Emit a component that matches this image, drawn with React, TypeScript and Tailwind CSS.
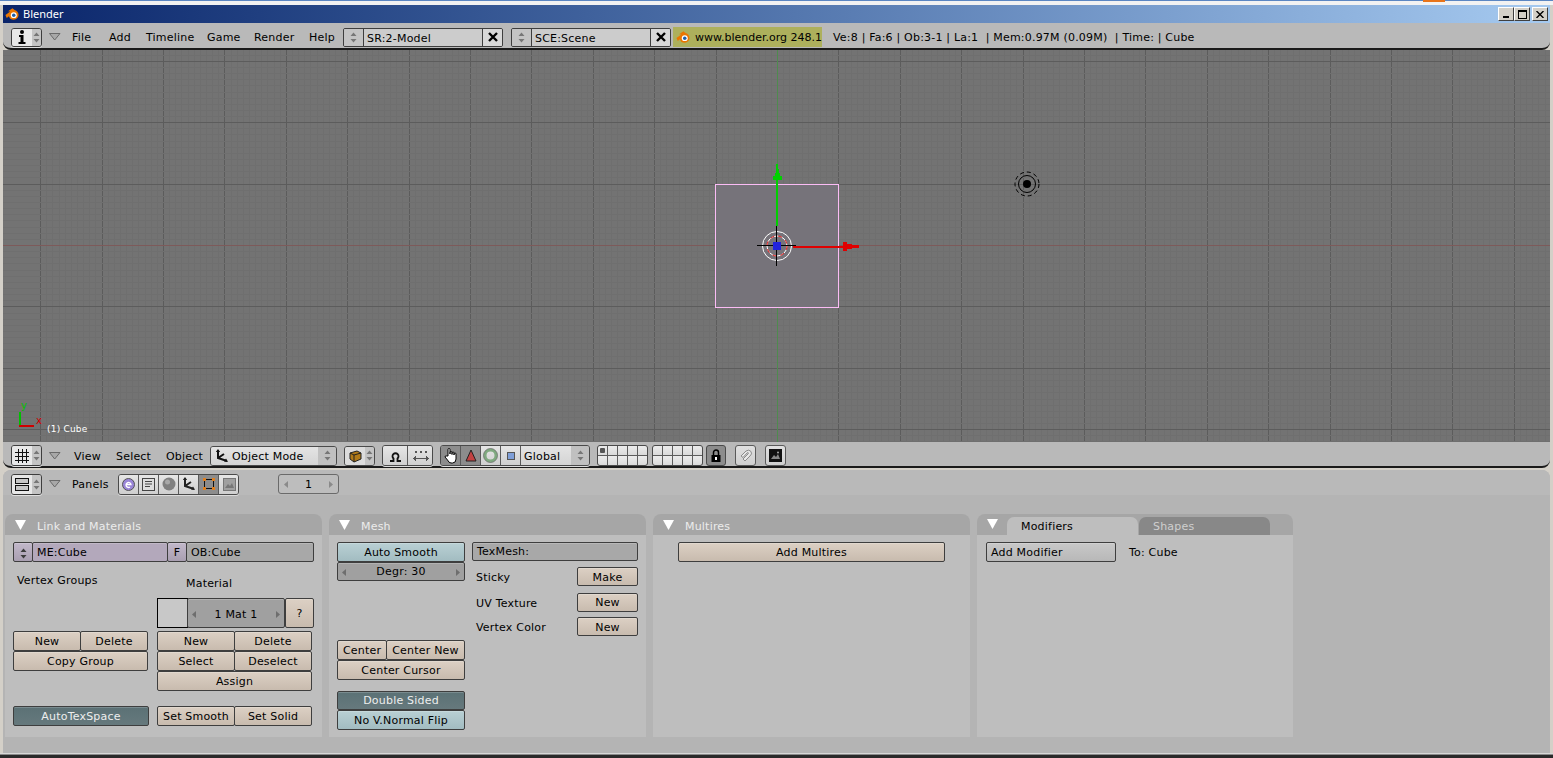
import type { ReactNode } from "react";

const tones = {
  tan: "bg-linear-to-b from-[#dcd0c4] to-[#c8bbae] text-black",
  teal: "bg-linear-to-b from-[#b9d0d4] to-[#a2bcc1] text-black",
  dark: "bg-linear-to-b from-[#5b7175] to-[#66797d] text-[#eeeeee]",
  grey: "bg-linear-to-b from-[#c8c8c8] to-[#b8b8b8] text-black",
  flat: "bg-[#a0a0a0] text-black",
  lilac: "bg-[#b3a8bb] text-black",
  lilacBtn: "bg-linear-to-b from-[#c2b8ca] to-[#a99fb1] text-black",
  field: "bg-[#c8c8c8] text-black",
  ob: "bg-[#a8a8a8] text-black",
  active: "bg-[#8a8a8a] text-black",
};

type Tone = keyof typeof tones;

function Btn({
  w,
  h = 20,
  tone = "tan",
  left,
  className = "",
  children,
}: {
  w: string;
  h?: number;
  tone?: Tone;
  left?: boolean;
  className?: string;
  children?: ReactNode;
}) {
  return (
    <div
      style={{ height: h }}
      className={`${w} ${tones[tone]} ${
        left ? "justify-start pl-[4px]" : "justify-center"
      } flex items-center shrink-0 pt-[2px] border border-[#3e3e3e] rounded-[2px] shadow-[inset_0_1px_0_#ffffff30] whitespace-pre ${className}`}
    >
      {children}
    </div>
  );
}

function UpDown({ color = "#555" }: { color?: string }) {
  return (
    <svg width="7" height="11" viewBox="0 0 7 11">
      <path d="M3.5 0.5 L6.5 4 H0.5Z M3.5 10.5 L6.5 7 H0.5Z" fill={color} />
    </svg>
  );
}

function Tri() {
  return (
    <svg width="12" height="8" viewBox="0 0 12 8" className="shrink-0">
      <path d="M0.5 0.5 H11 L5.7 7Z" fill="#a8a8a8" stroke="#6a6a6a" strokeWidth="1" />
    </svg>
  );
}

function BlenderLogo({ size = 14 }: { size?: number }) {
  return (
    <svg width={size} height={size} viewBox="0 0 16 16" className="shrink-0">
      <path d="M0.5 9 L6 5 L3.5 4.8 L8.5 1.5 L11 3.5 Q15.5 5 15.5 9.5 Q15 14 10 14.5 Q5.5 14.5 4.5 10.5 L2 12.5 Z" fill="#ea7600" />
      <circle cx="10" cy="9.3" r="3.4" fill="#fff" />
      <circle cx="10" cy="9.3" r="2" fill="#1f5fa8" />
    </svg>
  );
}

function TypeDrop({ h = "h-[21px]", children }: { h?: string; children: ReactNode }) {
  return (
    <div className={`w-[31px] ${h} shrink-0 flex border border-[#3e3e3e] rounded-[3px] overflow-hidden shadow-[0_1px_0_#e0e0e0]`}>
      <div className="w-[20px] bg-[#e8e8e8] flex items-center justify-center">{children}</div>
      <div className="flex-1 bg-[#c4c4c4] flex items-center justify-center">
        <UpDown color="#777" />
      </div>
    </div>
  );
}

function IconCell({ active, w = "w-[20px]", children }: { active?: boolean; w?: string; children?: ReactNode }) {
  return (
    <div
      className={`${w} h-full shrink-0 flex items-center justify-center border-r border-[#5a5a5a] last:border-r-0 ${
        active ? "bg-[#8c8c8c]" : "bg-linear-to-b from-[#e6e6e6] to-[#cfcfcf]"
      }`}
    >
      {children}
    </div>
  );
}

function Group({ w, h = "h-[21px]", children }: { w: string; h?: string; children: ReactNode }) {
  return (
    <div className={`${w} ${h} shrink-0 flex border border-[#4a4a4a] rounded-[3px] overflow-hidden shadow-[0_1px_0_#dcdcdc]`}>
      {children}
    </div>
  );
}

function LayerGrid({ w, first }: { w: string; first?: boolean }) {
  return (
    <div className={`${w} h-[21px] shrink-0 grid grid-cols-5 grid-rows-2 gap-px bg-[#5c5c5c] border border-[#4a4a4a] rounded-[3px] overflow-hidden`}>
      {Array.from({ length: 10 }).map((_, i) => (
        <div key={i} className="bg-linear-to-b from-[#ececec] to-[#dadada] flex items-center justify-center">
          {first && i === 0 && <div className="w-[5px] h-[5px] bg-[#555] rounded-[1px]" />}
        </div>
      ))}
    </div>
  );
}

function Menu({ w, className = "", children }: { w: string; className?: string; children: ReactNode }) {
  return <span className={`${w} pt-[3px] ${className}`}>{children}</span>;
}

function Viewport() {
  const xs: number[] = [];
  const ys: number[] = [];
  for (let i = -120; i <= 130; i++) xs.push(777 + i * 6.14);
  for (let i = -40; i <= 40; i++) ys.push(245 + i * 6.14);
  return (
    <div className="relative h-[392px] shrink-0 bg-[#737373] overflow-hidden">
      <svg width="1547" height="392" viewBox="3 50 1547 392" className="block" shapeRendering="crispEdges">
        {xs.map((x, i) => (
          <line key={i} x1={Math.round(x) + 0.5} x2={Math.round(x) + 0.5} y1="50" y2="442" stroke={(i - 120) % 10 === 0 ? "#5c5c5c" : "#6f6f6f"} />
        ))}
        {ys.map((y, i) => (
          <line key={i} y1={Math.round(y) + 0.5} y2={Math.round(y) + 0.5} x1="3" x2="1550" stroke={(i - 40) % 10 === 0 ? "#5c5c5c" : "#6f6f6f"} />
        ))}
        <line x1="3" x2="1550" y1="245.5" y2="245.5" stroke="#7d5a5a" />
        <line x1="777.5" x2="777.5" y1="50" y2="442" stroke="#4f8a4f" />
        <rect x="716" y="184.5" width="122.5" height="122.5" fill="#76737a" />
        <rect x="715.5" y="184.5" width="123" height="123" fill="none" stroke="#fbbcf5" />

        <g shapeRendering="auto">
          <circle cx="777" cy="246" r="14.5" fill="none" stroke="#fff" strokeWidth="1" />
          <circle cx="777" cy="246" r="10" fill="none" stroke="#fff" strokeWidth="1" />
          <circle cx="777" cy="246" r="10" fill="none" stroke="#e01010" strokeWidth="1" strokeDasharray="4 4" />
        </g>
        <rect x="776" y="166" width="2" height="60" fill="#00d000" />
        <path d="M776 164 h2 v5 h1 v4 h1 v3 h2 v4 h-9 v-4 h2 v-3 h1 v-4 h1z" fill="#00d000" />
        <rect x="793" y="246" width="52" height="2" fill="#e00000" />
        <path d="M843 242 h4 v2 h5 v1 h7 v3 h-7 v1 h-5 v2 h-4z" fill="#e00000" />
        <rect x="757" y="245" width="39" height="1" fill="#000" />
        <rect x="776" y="226" width="1" height="40" fill="#000" />
        <rect x="773" y="242" width="8" height="8" fill="#2222dd" />

        <g shapeRendering="auto">
          <circle cx="1027" cy="184" r="4" fill="#000" />
          <circle cx="1027" cy="184" r="8.5" fill="none" stroke="#000" />
          <circle cx="1027" cy="184" r="12" fill="none" stroke="#000" strokeDasharray="4 3" />
        </g>
        <rect x="19" y="412" width="2" height="14" fill="#00c000" />
        <rect x="19" y="425" width="15" height="2" fill="#d00000" />
      </svg>
      <span className="absolute left-[18px] top-[351px] text-[10px] leading-none text-[#00c000]">y</span>
      <span className="absolute left-[33px] top-[366px] text-[10px] leading-none text-[#d00000]">x</span>
      <span className="absolute left-[44px] top-[374px] text-[9px] leading-[10px] text-white">(1) Cube</span>
    </div>
  );
}

function PanelHead({ title }: { title: string }) {
  return (
    <div className="h-[21px] rounded-t-[8px] bg-[#a6a6a6] flex items-center pl-[10px] text-[#ececec]">
      <svg width="11" height="10" viewBox="0 0 11 10" className="shrink-0">
        <path d="M0 0 H11 L5.5 10Z" fill="#fff" />
      </svg>
      <span className="ml-[11px] leading-none pt-[3px]">{title}</span>
    </div>
  );
}

function ArrowNum({ w, h, label, tone }: { w: string; h: number; label: string; tone: Tone }) {
  return (
    <Btn w={w} h={h} tone={tone} className="justify-between! px-[4px]">
      <svg width="4" height="7" viewBox="0 0 4 7"><path d="M4 0 V7 L0 3.5Z" fill="#6e6e6e" /></svg>
      <span className={h > 20 ? "pt-[3px]" : ""}>{label}</span>
      <svg width="4" height="7" viewBox="0 0 4 7"><path d="M0 0 V7 L4 3.5Z" fill="#6e6e6e" /></svg>
    </Btn>
  );
}

function LinkPanel() {
  return (
    <div className="w-[317px] h-[223px] shrink-0 flex flex-col">
      <PanelHead title="Link and Materials" />
      <div className="flex-1 bg-[#bebebe] pl-[8px] pt-[7px]">
        <div className="flex w-[301px] h-[20px]">
          <Btn w="w-[20px]" tone="lilacBtn"><UpDown color="#3c3c3c" /></Btn>
          <Btn w="w-[136px] -ml-px" tone="lilac" left>ME:Cube</Btn>
          <Btn w="w-[20px] -ml-px" tone="lilacBtn">F</Btn>
          <Btn w="w-[128px] -ml-px" tone="ob" left>OB:Cube</Btn>
        </div>
        <div className="flex mt-[10px]">
          <div className="w-[144px] shrink-0">
            <div className="pl-[4px] h-[16px] leading-[18px]">Vertex Groups</div>
            <div className="mt-[43px] flex">
              <Btn w="w-[68px]">New</Btn>
              <Btn w="w-[68px] -ml-px">Delete</Btn>
            </div>
            <Btn w="w-[135px]">Copy Group</Btn>
            <Btn w="w-[136px] mt-[35px]" tone="dark">AutoTexSpace</Btn>
          </div>
          <div className="w-[157px] shrink-0">
            <div className="pl-[29px] h-[16px] leading-[18px] mt-[3px]">Material</div>
            <div className="flex h-[30px] mt-[7px]">
              <div className="w-[31px] h-[30px] shrink-0 bg-[#c8c8c8] border border-black" />
              <ArrowNum w="w-[98px] -ml-px" h={30} label="1 Mat 1" tone="flat" />
              <Btn w="w-[29px]" h={30}>?</Btn>
            </div>
            <div className="flex mt-[3px]">
              <Btn w="w-[78px]">New</Btn>
              <Btn w="w-[78px] -ml-px">Delete</Btn>
            </div>
            <div className="flex">
              <Btn w="w-[78px]">Select</Btn>
              <Btn w="w-[78px] -ml-px">Deselect</Btn>
            </div>
            <Btn w="w-[155px]">Assign</Btn>
            <div className="flex mt-[15px]">
              <Btn w="w-[78px]">Set Smooth</Btn>
              <Btn w="w-[78px] -ml-px">Set Solid</Btn>
            </div>
          </div>
        </div>
      </div>
    </div>
  );
}

function MeshRow({ label, btn, mt }: { label: string; btn: string; mt: string }) {
  return (
    <div className={`flex items-center justify-between pl-[4px] ${mt}`}>
      <span className="pt-[3px]">{label}</span>
      <Btn w="w-[61px]" h={19}>{btn}</Btn>
    </div>
  );
}

function MeshPanel() {
  return (
    <div className="w-[317px] h-[223px] shrink-0 flex flex-col">
      <PanelHead title="Mesh" />
      <div className="flex-1 bg-[#bebebe] pl-[8px] pt-[7px] flex">
        <div className="w-[128px] shrink-0">
          <Btn w="w-full" tone="teal">Auto Smooth</Btn>
          <ArrowNum w="w-full" h={19} label="Degr: 30" tone="flat" />
          <div className="flex mt-[59px]">
            <Btn w="w-[50px]">Center</Btn>
            <Btn w="w-[79px] -ml-px">Center New</Btn>
          </div>
          <Btn w="w-full">Center Cursor</Btn>
          <Btn w="w-full mt-[11px]" h={19} tone="dark">Double Sided</Btn>
          <Btn w="w-full" tone="teal">No V.Normal Flip</Btn>
        </div>
        <div className="w-[166px] ml-[7px] shrink-0">
          <Btn w="w-full" h={19} tone="ob" left>TexMesh:</Btn>
          <MeshRow label="Sticky" btn="Make" mt="mt-[6px]" />
          <MeshRow label="UV Texture" btn="New" mt="mt-[6px]" />
          <MeshRow label="Vertex Color" btn="New" mt="mt-[5px]" />
        </div>
      </div>
    </div>
  );
}

function MultiresPanel() {
  return (
    <div className="w-[317px] h-[223px] shrink-0 flex flex-col">
      <PanelHead title="Multires" />
      <div className="flex-1 bg-[#bebebe] pl-[25px] pt-[7px]">
        <Btn w="w-[267px]">Add Multires</Btn>
      </div>
    </div>
  );
}

function ModifiersPanel() {
  return (
    <div className="w-[316px] h-[223px] shrink-0 flex flex-col">
      <div className="h-[21px] rounded-t-[8px] bg-[#a6a6a6] flex items-end pl-[10px]">
        <svg width="11" height="10" viewBox="0 0 11 10" className="shrink-0 mb-[6px]">
          <path d="M0 0 H11 L5.5 10Z" fill="#fff" />
        </svg>
        <div className="ml-[9px] w-[131px] h-[18px] rounded-t-[7px] bg-[#bebebe] pl-[14px] leading-[20px]">Modifiers</div>
        <div className="ml-[1px] w-[131px] h-[18px] rounded-t-[7px] bg-[#888888] pl-[14px] leading-[20px] text-[#cfcfcf]">Shapes</div>
      </div>
      <div className="flex-1 bg-[#bebebe] pl-[9px] pt-[7px] flex">
        <Btn w="w-[130px]" tone="grey" left>Add Modifier</Btn>
        <span className="ml-[13px] leading-[22px]">To: Cube</span>
      </div>
    </div>
  );
}

function NameField({ label }: { label: string }) {
  return (
    <div className="w-[160px] h-[19px] shrink-0 flex border border-[#3e3e3e] rounded-[2px] overflow-hidden">
      <div className="w-[20px] bg-[#c4c4c4] flex items-center justify-center border-r border-[#3e3e3e]"><UpDown color="#777" /></div>
      <div className="flex-1 bg-[#cccccc] pl-[3px] leading-[20px]">{label}</div>
      <div className="w-[20px] bg-[#d8d8d8] border-l border-[#3e3e3e] flex items-center justify-center">
        <svg width="10" height="10" viewBox="0 0 10 10"><path d="M1 1 L9 9 M9 1 L1 9" stroke="#000" strokeWidth="2.4" /></svg>
      </div>
    </div>
  );
}

export default function App() {
  return (
    <div className="w-[1553px] h-[758px] overflow-hidden relative bg-[#d4d0c8] flex flex-col font-['DejaVu_Sans',sans-serif] text-[11px] tracking-[0.2px] text-black">
      <div className="h-px shrink-0 bg-[#5b86c2]" />
      <div className="h-[4px] shrink-0 bg-[#f2f2f2]" />
      <div className="absolute left-[1423px] top-0 w-[22px] h-[2px] bg-[#e8741a]" />

      <div className="flex-1 min-h-0 mx-[3px] flex flex-col">
        {/* Title bar */}
        <div className="h-[18px] shrink-0 flex items-center bg-linear-to-r from-[#0a246a] to-[#a6caf0] pl-[2px] pr-[2px]">
          <BlenderLogo />
          <span className="ml-[4px] pb-[2px] font-['Noto_Sans',sans-serif] text-[11px] tracking-normal text-white leading-none">Blender</span>
          <div className="ml-auto flex">
            {["min", "max"].map((k) => (
              <div key={k} className="w-[16px] h-[14px] bg-[#d4d0c8] border border-t-white border-l-white border-r-[#404040] border-b-[#404040] flex items-center justify-center">
                {k === "min" ? (
                  <div className="w-[6px] h-[2px] bg-black mt-[6px] -ml-[1px]" />
                ) : (
                  <div className="w-[9px] h-[9px] border border-black border-t-2" />
                )}
              </div>
            ))}
            <div className="ml-[2px] w-[16px] h-[14px] bg-[#d4d0c8] border border-t-white border-l-white border-r-[#404040] border-b-[#404040] flex items-center justify-center">
              <svg width="8" height="7" viewBox="0 0 8 7"><path d="M0.5 0 L7.5 7 M7.5 0 L0.5 7" stroke="#000" strokeWidth="1.4" /></svg>
            </div>
          </div>
        </div>

        {/* Info header */}
        <div className="h-[27px] shrink-0 flex items-center pl-[8px] pt-[3px] bg-[#b9b9b9] border-b-2 border-[#1a1a1a] rounded-b-[8px]">
          <TypeDrop h="h-[19px]">
            <svg width="8" height="14" viewBox="0 0 8 14">
              <circle cx="4" cy="2" r="2" fill="#000" />
              <path d="M1 5 H5.5 V12 H7.5 V14 H0.5 V12 H2.5 V7 H1Z" fill="#000" />
            </svg>
          </TypeDrop>
          <div className="ml-[7px]"><Tri /></div>
          <Menu w="w-[37px]" className="ml-[11px]">File</Menu>
          <Menu w="w-[37px]">Add</Menu>
          <Menu w="w-[61px]">Timeline</Menu>
          <Menu w="w-[47px]">Game</Menu>
          <Menu w="w-[55px]">Render</Menu>
          <Menu w="w-[34px]">Help</Menu>
          <NameField label="SR:2-Model" />
          <div className="ml-[8px]"><NameField label="SCE:Scene" /></div>
          <div className="ml-[2px] w-[149px] h-[20px] shrink-0 flex items-center pl-[3px] bg-[#adb05c] whitespace-pre tracking-normal">
            <BlenderLogo />
            <span className="ml-[5px] pt-[3px]">www.blender.org 248.1</span>
          </div>
          <span className="ml-[11px] pt-[3px] whitespace-pre">Ve:8 | Fa:6 | Ob:3-1 | La:1  | Mem:0.97M (0.09M)  | Time: | Cube</span>
        </div>

        <Viewport />

        {/* 3D view header */}
        <div className="h-[26px] shrink-0 flex items-center pl-[8px] pt-[3px] bg-[#b9b9b9] border-b-2 border-[#1a1a1a] rounded-b-[8px]">
          <TypeDrop>
            <svg width="14" height="14" viewBox="0 0 14 14" shapeRendering="crispEdges">
              <path d="M3.5 0 V14 M7.5 0 V14 M11.5 0 V14 M0 3.5 H14 M0 7.5 H14 M0 11.5 H14" stroke="#111" />
            </svg>
          </TypeDrop>
          <div className="ml-[7px]"><Tri /></div>
          <Menu w="w-[42px]" className="ml-[13px]">View</Menu>
          <Menu w="w-[50px]">Select</Menu>
          <Menu w="w-[45px]">Object</Menu>
          <div className="-ml-px w-[127px] h-[20px] shrink-0 flex border border-[#4a4a4a] rounded-[3px] overflow-hidden">
            <div className="flex-1 bg-linear-to-b from-[#e4e4e4] to-[#d4d4d4] flex items-center pl-[4px]">
              <svg width="14" height="14" viewBox="0 0 14 14" className="shrink-0">
                <path d="M3 1 V9 L12 12 M3 9 L9 5" fill="none" stroke="#111" strokeWidth="2" />
                <path d="M3 0 L0.8 3 H5.2Z M13 13 L9 12.6 L11 9.6Z" fill="#111" />
              </svg>
              <span className="ml-[3px] pt-[3px]">Object Mode</span>
            </div>
            <div className="w-[18px] bg-[#c0c0c0] flex items-center justify-center"><UpDown color="#777" /></div>
          </div>
          <div className="ml-[7px] w-[31px] h-[20px] shrink-0 flex border border-[#4a4a4a] rounded-[3px] overflow-hidden">
            <div className="w-[20px] bg-[#dcdcdc] flex items-center justify-center">
              <svg width="14" height="14" viewBox="0 0 14 14">
                <path d="M2 4 L9 2 L13 4 V10 L6 13 L2 10Z" fill="#b07a18" stroke="#222" />
                <path d="M2 4 L6 6 L13 4 M6 6 V13" fill="none" stroke="#222" />
              </svg>
            </div>
            <div className="flex-1 bg-[#c4c4c4] flex items-center justify-center"><UpDown color="#777" /></div>
          </div>
          <div className="ml-[7px]">
            <Group w="w-[51px]">
              <IconCell w="w-[25px]">
                <svg width="13" height="13" viewBox="0 0 13 13">
                  <path d="M1 12 H4.5 V9.5 A3 3 0 1 1 8.5 9.5 V12 H12" fill="none" stroke="#111" strokeWidth="1.8" />
                </svg>
              </IconCell>
              <IconCell w="w-[25px]">
                <svg width="16" height="12" viewBox="0 0 16 12" shapeRendering="crispEdges">
                  <path d="M2 1 h2 v2 h-2z M7 1 h2 v2 h-2z M12 1 h2 v2 h-2z" fill="#555" />
                  <path d="M1 8.5 H15 M3 6.5 L1 8.5 L3 10.5 M13 6.5 L15 8.5 L13 10.5" fill="none" stroke="#555" />
                </svg>
              </IconCell>
            </Group>
          </div>
          <div className="ml-[7px]">
            <Group w="w-[150px]">
              <IconCell active>
                <svg width="16" height="17" viewBox="0 0 16 17">
                  <path d="M5 9 V2.5 a1 1 0 0 1 2 0 V7 V5.5 a1 1 0 0 1 2 0 V7.5 V6 a1 1 0 0 1 2 0 V8 V7 a1 1 0 0 1 2 0 V12 Q13 16 9.500 16 H8 Q6 16 4.500 13 L2 10 Q2 8.500 3.500 9 Z" fill="#fff" stroke="#000" />
                </svg>
              </IconCell>
              <IconCell active>
                <svg width="12" height="13" viewBox="0 0 12 13"><path d="M6 1 L11 12 H1Z" fill="#c24242" stroke="#222" /></svg>
              </IconCell>
              <IconCell>
                <svg width="15" height="15" viewBox="0 0 15 15">
                  <circle cx="7.500" cy="7.500" r="5.500" fill="none" stroke="#7fa97f" strokeWidth="3" />
                  <circle cx="7.500" cy="7.500" r="7" fill="none" stroke="#666" strokeWidth="0.700" />
                </svg>
              </IconCell>
              <IconCell>
                <div className="w-[8px] h-[8px] bg-[#7f9fd8] border border-[#555]" />
              </IconCell>
              <div className="flex-1 bg-linear-to-b from-[#e4e4e4] to-[#d4d4d4] pl-[3px] leading-[21px]">Global</div>
              <div className="w-[18px] bg-[#c0c0c0] flex items-center justify-center"><UpDown color="#777" /></div>
            </Group>
          </div>
          <div className="ml-[7px] flex">
            <LayerGrid w="w-[51px]" first />
            <div className="w-[4px]" />
            <LayerGrid w="w-[51px]" />
          </div>
          <div className="ml-[3px] w-[20px] h-[21px] shrink-0 bg-[#8c8c8c] border border-[#4a4a4a] rounded-[3px] flex items-center justify-center">
            <svg width="10" height="13" viewBox="0 0 10 13">
              <path d="M2.500 6 V3.500 a2.500 2.500 0 0 1 5 0 V6" fill="none" stroke="#000" strokeWidth="1.500" />
              <rect x="0.500" y="6" width="9" height="7" fill="#000" />
              <rect x="4" y="8" width="2" height="3" fill="#fff" />
            </svg>
          </div>
          <div className="ml-[9px] w-[21px] h-[21px] shrink-0 bg-linear-to-b from-[#e0e0e0] to-[#cfcfcf] border border-[#5a5a5a] rounded-[3px] flex items-center justify-center">
            <svg width="15" height="15" viewBox="0 0 15 15">
              <path d="M3 8 L8 3 Q11 1 13 3.500 Q14.500 6 12 8 L7 13 L5 11 L10 6 Q11 4.500 9.500 4.500 L5 9.500Z" fill="#e8e8e8" stroke="#8c8c8c" />
            </svg>
          </div>
          <div className="ml-[9px] w-[21px] h-[21px] shrink-0 bg-linear-to-b from-[#e0e0e0] to-[#cfcfcf] border border-[#5a5a5a] rounded-[3px] flex items-center justify-center">
            <svg width="13" height="13" viewBox="0 0 13 13">
              <rect width="13" height="13" fill="#111" />
              <path d="M2 10 L5 6 L7 8 L9 5 L11 10Z" fill="#888" />
              <circle cx="9" cy="3.500" r="1" fill="#aaa" />
            </svg>
          </div>
        </div>

        {/* Buttons window */}
        <div className="flex-1 min-h-0 mt-[2px] rounded-t-[8px] bg-[#b4b4b4] flex flex-col">
          <div className="h-[25px] shrink-0 flex items-center pl-[8px] pt-[3px] bg-[#b9b9b9] rounded-t-[8px]">
            <TypeDrop>
              <svg width="14" height="13" viewBox="0 0 14 13">
                <rect x="0.500" y="0.500" width="13" height="5" fill="#c8c8c8" stroke="#111" />
                <rect x="0.500" y="7.500" width="13" height="5" fill="#c8c8c8" stroke="#111" />
              </svg>
            </TypeDrop>
            <div className="ml-[7px]"><Tri /></div>
            <Menu w="w-[46px]" className="ml-[11px]">Panels</Menu>
            <Group w="w-[121px]">
              <IconCell>
                <svg width="13" height="13" viewBox="0 0 13 13">
                  <circle cx="6.500" cy="6.500" r="6" fill="#9a86d8" stroke="#555" />
                  <path d="M4 6.500 H9 A2.500 2.500 0 1 0 8 9" fill="none" stroke="#fff" strokeWidth="1.300" />
                </svg>
              </IconCell>
              <IconCell>
                <svg width="13" height="13" viewBox="0 0 13 13">
                  <rect x="0.500" y="0.500" width="12" height="12" fill="#ddd" stroke="#444" />
                  <path d="M3 3.500 H10 M3 6 H10 M3 8.500 H8" stroke="#444" />
                </svg>
              </IconCell>
              <IconCell>
                <svg width="14" height="14" viewBox="0 0 14 14">
                  <circle cx="7" cy="7" r="6.500" fill="#808080" />
                  <circle cx="5.500" cy="5" r="2.500" fill="#a8a8a8" />
                </svg>
              </IconCell>
              <IconCell>
                <svg width="14" height="14" viewBox="0 0 14 14">
                  <path d="M3 1 V9 L12 12 M3 9 L9 5" fill="none" stroke="#222" strokeWidth="2" />
                  <path d="M3 0 L0.800 3 H5.200Z M13 13 L9 12.600 L11 9.600Z" fill="#222" />
                </svg>
              </IconCell>
              <IconCell active>
                <svg width="14" height="14" viewBox="0 0 14 14" shapeRendering="crispEdges">
                  <rect x="2.500" y="2.500" width="9" height="9" fill="none" stroke="#111" />
                  <path d="M1 1 h3 v3 h-3z M10 1 h3 v3 h-3z M1 10 h3 v3 h-3z M10 10 h3 v3 h-3z" fill="#e08020" />
                </svg>
              </IconCell>
              <IconCell>
                <svg width="13" height="13" viewBox="0 0 13 13">
                  <rect x="0.500" y="0.500" width="12" height="12" fill="#a0a0a0" stroke="#777" />
                  <path d="M2 10 L5 6 L7 8 L9 5 L11 10Z" fill="#777" />
                </svg>
              </IconCell>
            </Group>
            <div className="ml-[39px] w-[61px] h-[20px] shrink-0 bg-[#bdbdbd] border border-[#6a6a6a] rounded-[3px] flex items-center justify-between px-[5px]">
              <svg width="4" height="7" viewBox="0 0 4 7"><path d="M4 0 V7 L0 3.5Z" fill="#8a8a8a" /></svg>
              <span className="pt-[3px]">1</span>
              <svg width="4" height="7" viewBox="0 0 4 7"><path d="M0 0 V7 L4 3.5Z" fill="#8a8a8a" /></svg>
            </div>
          </div>
          <div className="flex pl-[2px] pt-[19px] gap-[7px]">
            <LinkPanel />
            <MeshPanel />
            <MultiresPanel />
            <ModifiersPanel />
          </div>
        </div>
      </div>

      <div className="h-px shrink-0 bg-[#d8d8d8]" />
      <div className="h-px shrink-0 bg-[#8a8a8a]" />
      <div className="h-[3px] shrink-0 bg-[#2a2a2a]" />
    </div>
  );
}
